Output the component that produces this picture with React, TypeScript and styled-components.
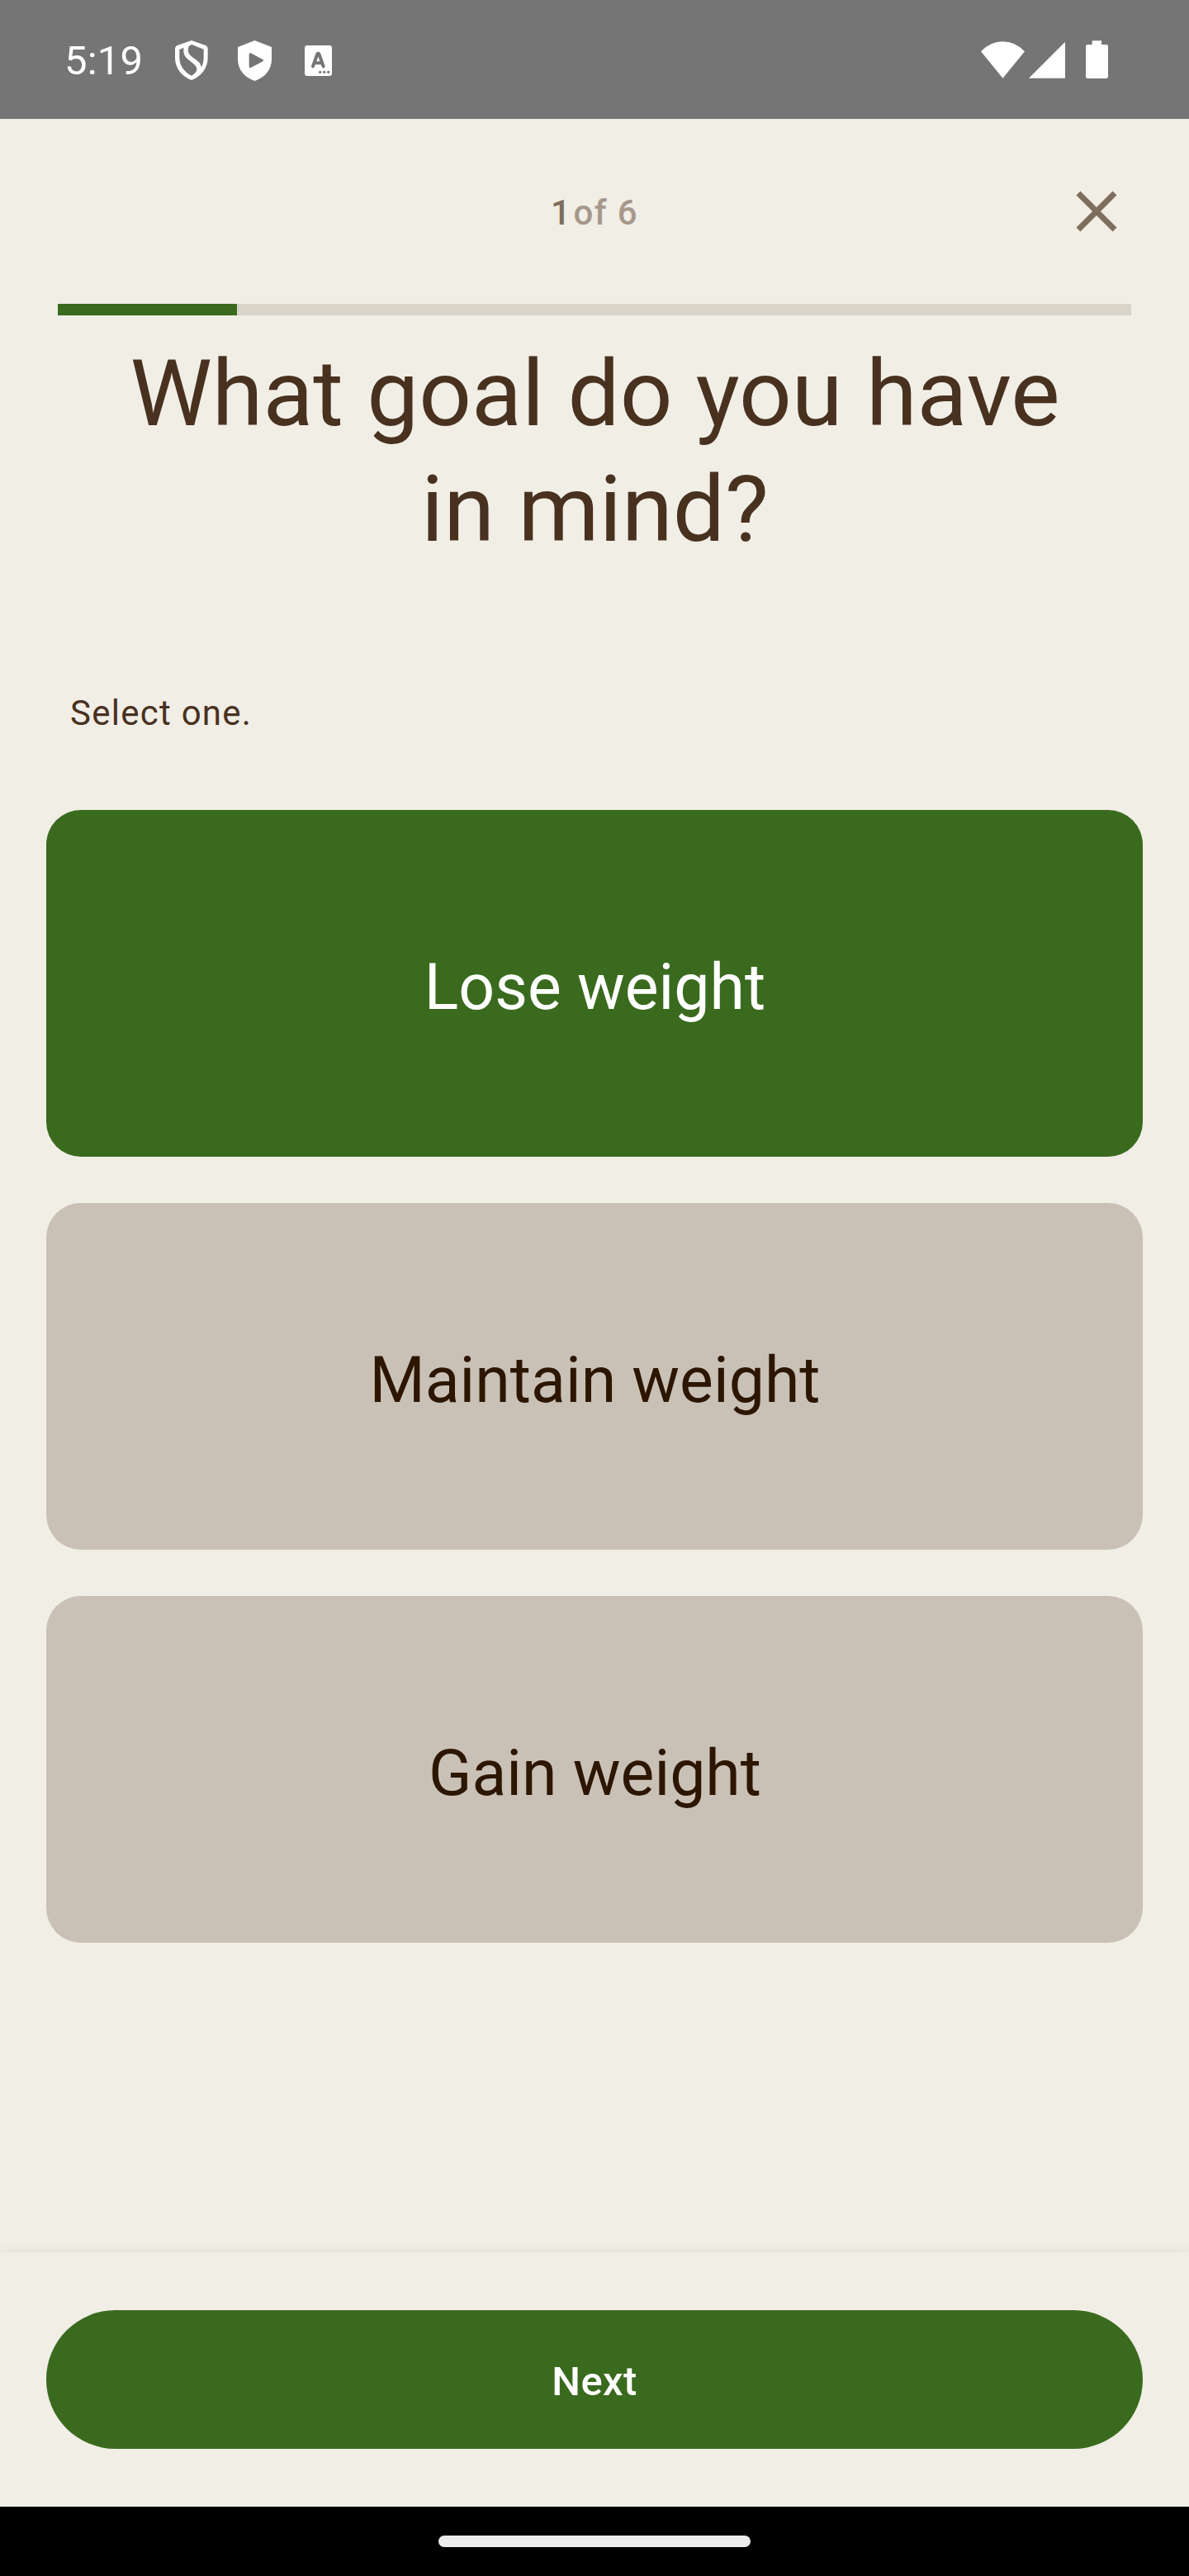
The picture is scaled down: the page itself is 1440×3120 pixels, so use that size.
import React, { useState } from "react";
import styled, { createGlobalStyle } from "styled-components";

const colors = {
  surface: "#f1eee6",
  green: "#3a6a1e",
  track: "#d8d4c8",
  option: "#cac1b6",
  title: "#48311f",
  optionText: "#2c1600",
  muted: "#7f6d5d",
  mutedSoft: "#a6988b",
};

const GlobalStyle = createGlobalStyle`
  body { margin: 0; background: ${colors.surface}; }
  * { box-sizing: border-box; }
  button { border: 0; padding: 0; margin: 0; font: inherit; cursor: pointer; }
`;

const Screen = styled.div`
  display: flex;
  flex-direction: column;
  width: 1440px;
  height: 3120px;
  background: ${colors.surface};
  font-family: Roboto, "Noto Sans", sans-serif;
  overflow: hidden;
`;

const StatusBar = styled.header`
  display: flex;
  justify-content: space-between;
  height: 144px;
  padding: 49px 98px 0 78px;
  background: #757575;
  color: #fff;
`;

const StatusGroup = styled.div`
  display: flex;
  align-items: flex-start;
  height: 50px;
`;

const Clock = styled.time`
  width: 134px;
  font-size: 49px;
  line-height: 50px;
  letter-spacing: 0.2px;
  white-space: nowrap;
`;

const Glyph = styled.svg<{ $w: number; $gap?: number }>`
  display: block;
  flex: none;
  width: ${(p) => p.$w}px;
  height: 50px;
  margin-right: ${(p) => p.$gap ?? 0}px;
`;

const TopBar = styled.div`
  display: grid;
  grid-template-columns: 84px 1fr 84px;
  align-items: center;
  height: 224px;
  padding: 0 70px;
`;

const StepCount = styled.div`
  grid-column: 2;
  display: flex;
  justify-content: center;
  gap: 2.2px;
  padding-top: 3px;
  color: ${colors.mutedSoft};
  font-size: 42px;
  font-weight: 500;
  line-height: 56px;
  letter-spacing: 1.4px;
  white-space: pre;
`;

const StepCurrent = styled.span`
  color: ${colors.muted};
`;

const CloseButton = styled.button`
  width: 84px;
  height: 84px;
  background: none;
  color: ${colors.muted};
  svg { display: block; width: 84px; height: 84px; }
`;

const ProgressTrack = styled.div`
  flex: none;
  height: 14px;
  margin: 0 70px;
  background: ${colors.track};
`;

const ProgressFill = styled.div`
  height: 100%;
  background: ${colors.green};
`;

const Title = styled.h1`
  margin: 25px 112px 0 113px;
  color: ${colors.title};
  font-size: 112px;
  font-weight: 400;
  line-height: 140px;
  word-spacing: 0.5px;
  text-align: center;
`;

const Hint = styled.p`
  margin: 149px 85px 0;
  color: ${colors.title};
  font-size: 42px;
  line-height: 56px;
  letter-spacing: 1.26px;
`;

const Options = styled.div`
  display: flex;
  flex-direction: column;
  gap: 56px;
  margin-top: 89px;
  padding: 0 56px;
`;

const OptionCard = styled.button<{ $selected: boolean }>`
  display: flex;
  align-items: center;
  justify-content: center;
  height: 420px;
  border-radius: 42px;
  background: ${(p) => (p.$selected ? colors.green : colors.option)};
  color: ${(p) => (p.$selected ? "#fff" : colors.optionText)};
  font-size: 77px;
  line-height: 98px;
  padding: 10px 0 0 1px;
`;

const Footer = styled.footer`
  height: 308px;
  margin-top: auto;
  padding: 70px 56px;
  background: ${colors.surface};
  box-shadow: 0 0 14px rgba(60, 50, 30, 0.09);
`;

const NextButton = styled.button`
  width: 100%;
  height: 168px;
  padding-top: 5px;
  border-radius: 84px;
  background: ${colors.green};
  color: #fff;
  font-size: 49px;
  font-weight: 500;
  letter-spacing: 0.35px;
`;

const NavBar = styled.nav`
  display: flex;
  align-items: center;
  justify-content: center;
  flex: none;
  position: relative;
  height: 84px;
  background: #000;
`;

const HomePill = styled.div`
  width: 378px;
  height: 14px;
  border-radius: 7px;
  background: #ececec;
`;

const goals = ["Lose weight", "Maintain weight", "Gain weight"];
const step = 1;
const totalSteps = 6;

function NotificationIcons() {
  return (
    <>
      <Glyph $w={40} $gap={36} viewBox="636 147 120 150">
        <path fill="#fff" fillRule="evenodd" d="M696 147L747 165Q755 168 755 176V210C755 248 730 279 696 291C661 279 636 248 636 210V176Q636 168 644 165ZM652 180V209C652 240 671 262 696 275C704 270 715 263 715 252C715 238 700 229 686 218C676 210 668 202 667 185V173ZM683 180C683 200 700 208 712 217C722 225 729 230 732 245C737 234 740 222 740 210V179L697 162C688 164 683 170 683 180Z" />
      </Glyph>
      <Glyph $w={41} $gap={40} viewBox="864 147 123 150">
        <path fill="#fff" fillRule="evenodd" d="M925.500 147L987 171V216C987 253 961 283 925.500 294C890 283 864 253 864 216V171ZM905 197V242Q905 248 911 246L955 223Q960 219.500 955 216L911 193Q905 191 905 197Z" />
      </Glyph>
      <Glyph $w={33} viewBox="1107 147 99 150">
        <rect x="1107" y="165" width="99" height="111" rx="9" fill="#fff" />
        <path d="M1137 241L1153 196Q1156 192 1159 196L1175 241M1144 229H1168" fill="none" stroke="#757575" strokeWidth="12" strokeLinecap="round" strokeLinejoin="round" />
        <g fill="#757575">
          <circle cx="1163" cy="262" r="5" />
          <circle cx="1178" cy="262" r="5" />
          <circle cx="1193" cy="262" r="5" />
        </g>
      </Glyph>
    </>
  );
}

function SystemIcons() {
  return (
    <>
      <Glyph $w={53} $gap={4.67} viewBox="144 147 159 150" fill="#fff">
        <path d="M144 187Q178 151 223.500 151T303 187L223.500 284Z" />
      </Glyph>
      <Glyph $w={44.33} $gap={25} viewBox="317 147 133 150" fill="#fff">
        <path d="M317 284.500L450 151V284.500Z" />
      </Glyph>
      <Glyph $w={27} viewBox="525 147 81 150" fill="#fff">
        <path d="M548 147.500H582V162H599Q606 162 606 169V278Q606 285 599 285H532Q525 285 525 278V169Q525 162 532 162H548Z" />
      </Glyph>
    </>
  );
}

export default function App() {
  const [goal, setGoal] = useState(goals[0]);

  return (
    <Screen>
      <GlobalStyle />
      <StatusBar>
        <StatusGroup>
          <Clock>5:19</Clock>
          <NotificationIcons />
        </StatusGroup>
        <StatusGroup>
          <SystemIcons />
        </StatusGroup>
      </StatusBar>
      <TopBar>
        <StepCount>
          <StepCurrent>{step}</StepCurrent>
          <span>of {totalSteps}</span>
        </StepCount>
        <CloseButton aria-label="Close">
          <svg viewBox="0 0 24 24" fill="currentColor">
            <path d="M19 6.410L17.590 5 12 10.590 6.410 5 5 6.410 10.590 12 5 17.590 6.410 19 12 13.410 17.590 19 19 17.590 13.410 12z" />
          </svg>
        </CloseButton>
      </TopBar>
      <ProgressTrack>
        <ProgressFill style={{ width: `${(step / totalSteps) * 100}%` }} />
      </ProgressTrack>
      <Title>What goal do you have in mind?</Title>
      <Hint>Select one.</Hint>
      <Options>
        {goals.map((label) => (
          <OptionCard key={label} $selected={label === goal} onClick={() => setGoal(label)}>
            {label}
          </OptionCard>
        ))}
      </Options>
      <Footer>
        <NextButton>Next</NextButton>
      </Footer>
      <NavBar>
        <HomePill />
      </NavBar>
    </Screen>
  );
}
